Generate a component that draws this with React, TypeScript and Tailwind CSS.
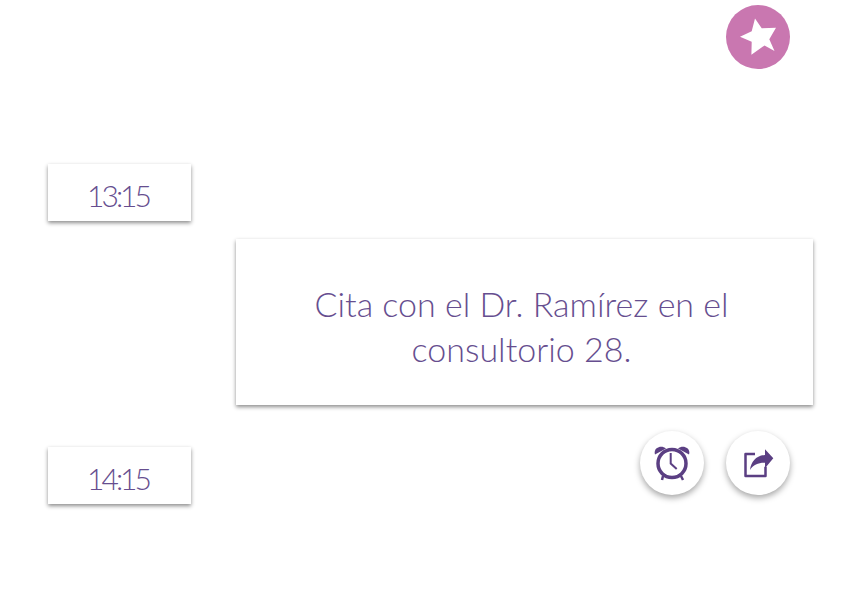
function TimeCard({ time }: { time: string }) {
  return (
    <div className="flex h-[57px] w-[143px] items-center justify-center bg-white pr-[3px] pt-[5px] text-[30px] font-light tracking-[-3px] text-[#664e8f] shadow-[0_2px_4px_rgba(0,0,0,0.45)]">
      {time}
    </div>
  );
}

function StarIcon() {
  return (
    <svg viewBox="736 15 44 44" className="h-[44px] w-[44px]" fill="#ffffff">
      <path d="M755 18.5 L761.7 28.3 L776 27.8 L769.3 39.3 L774.5 51 L764.5 45.5 L751.4 54.8 L751.7 41.7 L740 36.7 L751.7 31.2 Z" />
    </svg>
  );
}

function AlarmIcon() {
  return (
    <svg viewBox="0 0 36 36" className="h-[36px] w-[36px]" fill="none">
      <circle cx="18" cy="18.5" r="14" stroke="#5b3f83" strokeWidth="3.5" />
      <path d="M16.7 8 V18.5 L22.7 24" stroke="#5b3f83" strokeWidth="2" />
      <path d="M1 9.5 C-1 3 7 -0.5 12 3.5 Z" fill="#5b3f83" />
      <path d="M35 9.5 C37 3 29 -0.5 24 3.5 Z" fill="#5b3f83" />
      <path d="M9 31 L8 35 M27 31 L29 35" stroke="#5b3f83" strokeWidth="2.5" />
    </svg>
  );
}

function ShareIcon() {
  return (
    <svg viewBox="0 0 32 32" className="h-[32px] w-[32px]" fill="none">
      <path d="M13 6.9 H3.5 V29.1 H23.5 V19.7" stroke="#5b3f83" strokeWidth="2.5" strokeLinejoin="round" />
      <path d="M23 2.3 L31.3 11.3 L23 21.3 V15.7 C17 15.5 11 17.5 8 23 C9 15 14 8.5 23 8 Z" fill="#5b3f83" />
    </svg>
  );
}

export default function App() {
  return (
    <div className="h-[592px] w-[864px] overflow-hidden bg-white font-['Lato',sans-serif]">
      <div className="flex justify-end pr-[74px] pt-[5px]">
        <button className="flex h-[64px] w-[64px] items-center justify-center rounded-full bg-[#c977b0]">
          <StarIcon />
        </button>
      </div>

      <div className="mt-[95px] pl-[48px]">
        <TimeCard time="13:15" />
      </div>

      <div className="mt-[18px] flex justify-end pr-[51px]">
        <div className="flex h-[166px] w-[577px] items-center justify-center bg-white pr-[6px] pt-[8px] text-center text-[34px] font-light leading-[45px] text-[#664e8f] shadow-[0_2px_4px_rgba(0,0,0,0.45)]">
          <p className="w-[460px]">Cita con el Dr. Ramírez en el consultorio 28.</p>
        </div>
      </div>

      <div className="mt-[26px] flex items-start justify-between pl-[48px] pr-[74px]">
        <div className="pt-[16px]">
          <TimeCard time="14:15" />
        </div>
        <div className="flex gap-[22px]">
          <button className="flex h-[64px] w-[64px] items-center justify-center rounded-full bg-white shadow-[0_3px_6px_rgba(0,0,0,0.35)]">
            <AlarmIcon />
          </button>
          <button className="flex h-[64px] w-[64px] items-center justify-center rounded-full bg-white shadow-[0_3px_6px_rgba(0,0,0,0.35)]">
            <ShareIcon />
          </button>
        </div>
      </div>
    </div>
  );
}
